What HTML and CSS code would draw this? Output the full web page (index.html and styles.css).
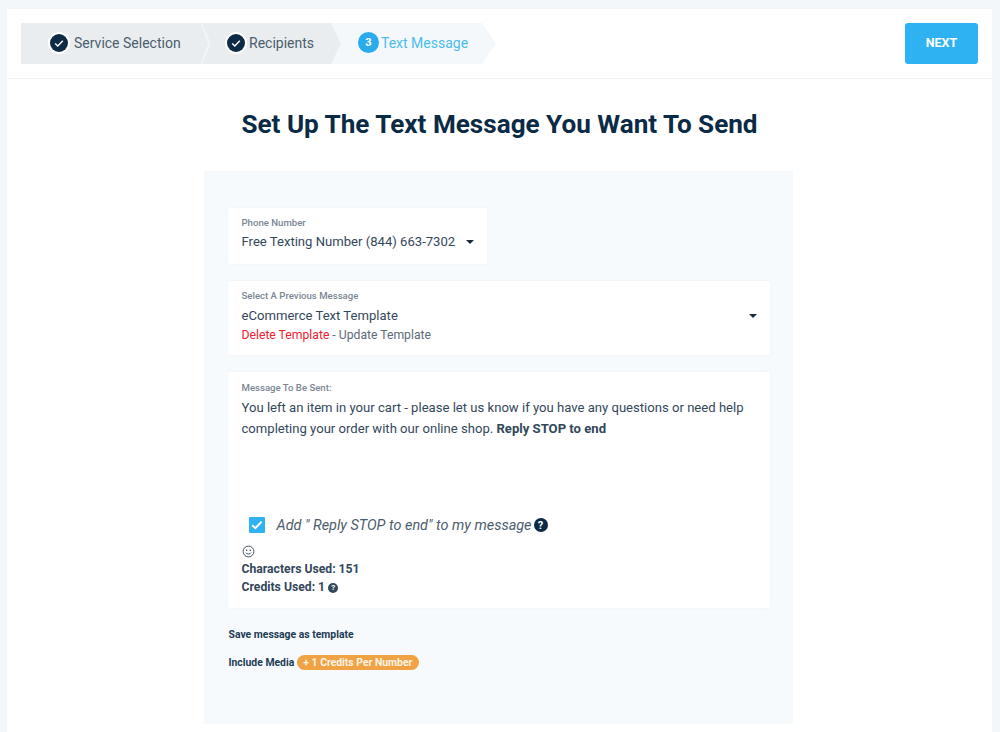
FILE: index.html
```html
<!DOCTYPE html>
<html lang="en">
<head>
    <meta charset="UTF-8">
    <title>Set Up Text Message</title>
    <link rel="stylesheet" href="styles.css">
</head>
<body>

    <div class="container">
        <header class="topbar">
            <div class="steps">
                <div class="step step-first">
                    <span class="step-icon done">
                        <svg viewBox="0 0 18 18" width="18" height="18"><path d="M5.2 9.4l2.6 2.5 5-5.2" fill="none" stroke="#fff" stroke-width="1.4"/></svg>
                    </span>
                    <span>Service Selection</span>
                </div>
                <div class="step step-second">
                    <span class="step-icon done">
                        <svg viewBox="0 0 18 18" width="18" height="18"><path d="M5.2 9.4l2.6 2.5 5-5.2" fill="none" stroke="#fff" stroke-width="1.4"/></svg>
                    </span>
                    <span>Recipients</span>
                </div>
                <div class="step step-active">
                    <span class="step-icon current">3</span>
                    <span>Text Message</span>
                </div>
            </div>
            <button class="next-button">NEXT</button>
        </header>

        <main class="content">
            <h1>Set Up The Text Message You Want To Send</h1>

            <div class="panel">
                <div class="card card-phone">
                    <div class="field-label">Phone Number</div>
                    <div class="select-row">
                        <span>Free Texting Number (844) 663-7302</span>
                        <span class="caret"></span>
                    </div>
                </div>

                <div class="card card-previous">
                    <div class="field-label">Select A Previous Message</div>
                    <div class="select-row">
                        <span>eCommerce Text Template</span>
                        <span class="caret"></span>
                    </div>
                    <div class="template-links"><span class="delete-link">Delete Template</span> - Update Template</div>
                </div>

                <div class="card card-message">
                    <div class="field-label">Message To Be Sent:</div>
                    <p class="message-text">You left an item in your cart - please let us know if you have any questions or need help completing your order with our online shop. <b>Reply STOP to end</b></p>

                    <div class="stop-row">
                        <span class="checkbox">
                            <svg viewBox="0 0 16 16" width="16" height="16"><path d="M3.2 8.2l3.2 3 6.2-6.6" fill="none" stroke="#fff" stroke-width="2"/></svg>
                        </span>
                        <em>Add " Reply STOP to end" to my message</em>
                        <span class="help help-large">?</span>
                    </div>

                    <svg class="smiley" viewBox="0 0 14 14" width="13" height="13">
                        <circle cx="7" cy="7" r="5.8" fill="none" stroke="#33475b" stroke-width="1"/>
                        <circle cx="5" cy="5.6" r="0.8" fill="#33475b"/>
                        <circle cx="9" cy="5.6" r="0.8" fill="#33475b"/>
                        <path d="M4.2 8.2c.8 2 4.8 2 5.6 0" fill="none" stroke="#33475b" stroke-width="1"/>
                    </svg>
                    <div class="usage">Characters Used: 151</div>
                    <div class="usage">Credits Used: 1 <span class="help help-small">?</span></div>
                </div>

                <div class="option">Save message as template</div>
                <div class="option option-media">Include Media <span class="badge">+ 1 Credits Per Number</span></div>
            </div>
        </main>
    </div>

</body>
</html>
```

FILE: styles.css
```css
html, body {
    height: 100%;
}

body {
    font-family: Roboto, "Liberation Sans", Arial, sans-serif;
    background-color: #f4f7fa;
    color: #33475b;
    margin: 0;
    padding: 9px 8px 0 7px;
    box-sizing: border-box;
    overflow: hidden;
}

.container {
    height: 100%;
    background-color: #fff;
}

.topbar {
    display: flex;
    align-items: center;
    justify-content: space-between;
    height: 69px;
    padding: 0 14px;
    border-bottom: 1px solid #f0f3f6;
}

.steps {
    display: flex;
    height: 41px;
}

.step {
    display: flex;
    align-items: center;
    box-sizing: border-box;
    padding-bottom: 2px;
    font-size: 14px;
    background-color: #e9edf0;
    color: #4c5d6c;
}

.step-first {
    width: 180px;
    padding-left: 29px;
}

.step-first .step-icon {
    margin-right: 6px;
}

.step-second {
    position: relative;
    z-index: 1;
    width: 140px;
    padding-left: 26px;
    clip-path: polygon(0 0, 130px 0, 140px 50%, 130px 100%, 0 100%);
}

.step-second .step-icon {
    margin-right: 4px;
}

/* faint chevron between the two finished steps */
.step-second::before {
    content: "";
    position: absolute;
    top: 0;
    left: -1px;
    width: 11px;
    height: 100%;
    background-color: #f1f4f6;
    clip-path: polygon(0 0, 2px 0, 11px 50%, 2px 100%, 0 100%, 8px 50%);
}

.step-active {
    width: 165px;
    margin-left: -10px;
    padding-left: 27px;
    background-color: #f4f8fb;
    color: #4dbcee;
    clip-path: polygon(0 0, 151px 0, 165px 50%, 151px 100%, 0 100%);
}

.step-icon {
    display: flex;
    align-items: center;
    justify-content: center;
    width: 18px;
    height: 18px;
    border-radius: 50%;
    flex-shrink: 0;
}

.step-icon.done {
    background-color: #0d2a47;
    box-shadow: 0 0 0 2px #fff;
}

.step-icon.current {
    width: 21px;
    height: 21px;
    margin-right: 2px;
    background-color: #29abec;
    color: #fff;
    font-size: 11px;
    font-weight: 700;
}

.next-button {
    width: 73px;
    height: 41px;
    padding: 0 0 2px;
    border: none;
    border-radius: 3px;
    background-color: #2eb2f1;
    color: #fff;
    font-family: inherit;
    font-size: 12.5px;
    font-weight: 700;
}

.content {
    display: flex;
    flex-direction: column;
    align-items: center;
}

h1 {
    margin: 29px 0 31px;
    font-size: 26.1px;
    line-height: 32px;
    font-weight: 700;
    color: #0b2a45;
}

.panel {
    width: 589px;
    height: 553px;
    box-sizing: border-box;
    padding: 37px 23px 0 24px;
    margin-right: 3px;
    background-color: #f7fafd;
}

.card {
    background-color: #fff;
    padding: 10px 13px 10px 14px;
    border-radius: 3px;
    box-shadow: 0 0 3px rgba(220, 228, 235, 0.4);
    box-sizing: border-box;
}

.card-phone {
    width: 259px;
    height: 56px;
    margin-bottom: 17px;
    padding-top: 9px;
}

.card-phone .select-row {
    margin-top: 5px;
}

.card-previous {
    height: 74px;
    margin-bottom: 17px;
    padding-top: 9px;
}

.card-previous .select-row {
    margin-top: 6px;
}

.card-message {
    height: 236px;
}

.field-label {
    font-size: 9.6px;
    line-height: 11px;
    font-weight: 500;
    color: #7a8692;
}

.select-row {
    display: flex;
    align-items: center;
    justify-content: space-between;
    font-size: 13.1px;
    line-height: 18px;
    color: #33475b;
}

.caret {
    width: 0;
    height: 0;
    border-left: 4.5px solid transparent;
    border-right: 4.5px solid transparent;
    border-top: 4.5px solid #1b2b3a;
}

.template-links {
    margin-top: 1px;
    font-size: 12.2px;
    line-height: 18px;
    color: #5d6b78;
}

.delete-link {
    color: #f0202f;
}

.message-text {
    margin: 4px 0 0;
    height: 118px;
    font-size: 13.1px;
    line-height: 21px;
    color: #33475b;
}

.stop-row {
    display: flex;
    align-items: center;
    height: 20px;
    padding-left: 7px;
    font-size: 14.45px;
    color: #4c5d6c;
}

.stop-row em {
    margin-left: 12px;
    margin-right: 2px;
}

.checkbox {
    display: flex;
    width: 16px;
    height: 16px;
    border-radius: 1px;
    background-color: #2eb2f1;
}

.help {
    display: inline-flex;
    align-items: center;
    justify-content: center;
    border-radius: 50%;
    background-color: #0b2a45;
    color: #fff;
    font-weight: 700;
}

.help-large {
    width: 14px;
    height: 14px;
    font-size: 11px;
}

.help-small {
    width: 10px;
    height: 10px;
    font-size: 8px;
    background-color: #33475b;
    vertical-align: 1px;
}

.smiley {
    display: block;
    margin: 10px 0 2px;
}

.usage {
    font-size: 12.2px;
    line-height: 18px;
    font-weight: 700;
    color: #33475b;
}

.option {
    padding-left: 1px;
    font-size: 10.4px;
    line-height: 14px;
    font-weight: 700;
    color: #1d3a55;
    margin-top: 20px;
}

.option-media {
    margin-top: 13px;
}

.badge {
    display: inline-block;
    padding: 0 6.5px;
    border-radius: 8px;
    background-color: #f0a345;
    color: #fdf3e4;
    line-height: 15px;
}
```
